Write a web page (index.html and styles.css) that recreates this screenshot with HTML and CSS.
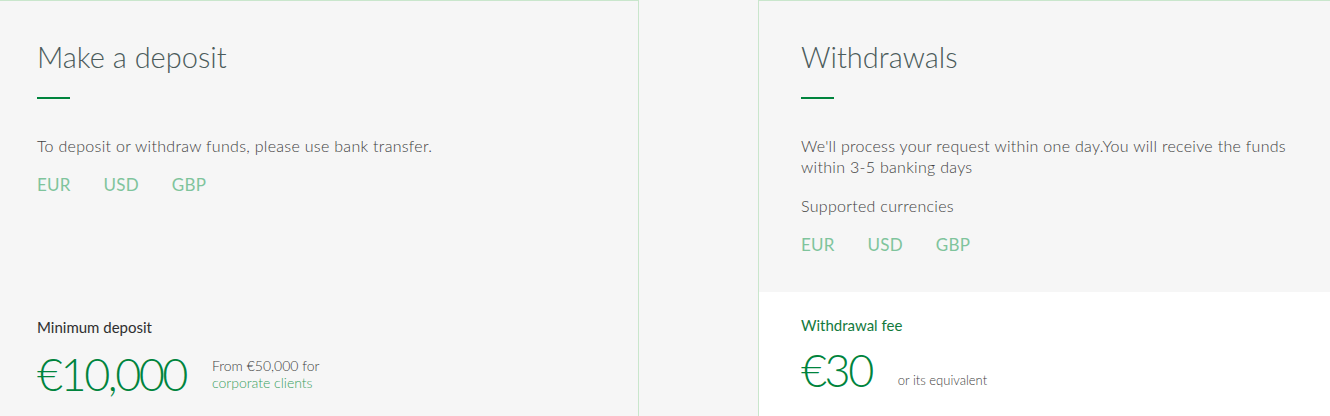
FILE: index.html
```html
<!DOCTYPE html>
<html lang="en">
<head>
    <meta charset="UTF-8">
    <meta name="viewport" content="width=device-width, initial-scale=1.0">
    <title>Deposits and withdrawals</title>
    <link rel="stylesheet" href="styles.css">
</head>
<body>

    <div class="funds">

        <div class="card card-deposit">
            <div class="card-top">
                <h2 class="card-title">Make a deposit</h2>
                <span class="title-line"></span>
                <p class="card-text">To deposit or withdraw funds, please use bank transfer.</p>
                <ul class="currencies">
                    <li>EUR</li>
                    <li>USD</li>
                    <li>GBP</li>
                </ul>
            </div>
            <div class="card-bottom">
                <div class="label">Minimum deposit</div>
                <div class="amount-row">
                    <span class="amount">€10,000</span>
                    <span class="amount-note">From €50,000 for<br><a href="#">corporate clients</a></span>
                </div>
            </div>
        </div>

        <div class="card card-withdraw">
            <div class="card-top">
                <h2 class="card-title">Withdrawals</h2>
                <span class="title-line"></span>
                <p class="card-text text-wide">We'll process your request within one day.You will receive the funds within 3-5 banking days</p>
                <p class="card-text">Supported currencies</p>
                <ul class="currencies">
                    <li>EUR</li>
                    <li>USD</li>
                    <li>GBP</li>
                </ul>
            </div>
            <div class="card-bottom bottom-white">
                <div class="label label-green">Withdrawal fee</div>
                <div class="amount-row">
                    <span class="amount">€30</span>
                    <span class="amount-note note-low">or its equivalent</span>
                </div>
            </div>
        </div>

    </div>

</body>
</html>
```

FILE: styles.css
```css
body{
    margin: 0;
    background-color: #f6f6f6;
    font-family: Lato, 'Open Sans', sans-serif;
    color: #444;
}

.funds{
    display: flex;
    gap: 119px;
    height: 416px;
}

.card{
    border: 1px solid #c9e6cc;
    border-bottom: none;
    background-color: #f6f6f6;
    display: flex;
    flex-direction: column;
}

.card-deposit{
    width: 638px;
    margin-left: -1px;
    flex-shrink: 0;
}

.card-withdraw{
    flex: 1;
    margin-right: -1px;
}

.card-top{
    height: 291px;
    padding: 39px 37px 0;
    box-sizing: border-box;
}

.card-withdraw .card-top{
    padding-left: 42px;
}

.card-title{
    margin: 0;
    font-size: 29px;
    font-weight: 300;
    line-height: 34px;
    color: #4b5b5b;
}

.title-line{
    display: block;
    width: 33px;
    height: 2px;
    margin-top: 23px;
    background-color: #00843d;
}

.card-text{
    margin: 36px 0 0;
    font-size: 16px;
    font-weight: 300;
    line-height: 21px;
    letter-spacing: 0.3px;
    color: #3f3f3f;
}

.card-text + .card-text{
    margin-top: 18px;
}

.text-wide{
    max-width: 500px;
}

.currencies{
    list-style: none;
    margin: 18px 0 0;
    padding: 0;
    display: flex;
    gap: 33px;
    font-size: 17px;
    line-height: 21px;
    letter-spacing: 0.2px;
    color: #7fc49c;
}

.card-bottom{
    flex: 1;
    padding: 25px 37px 0;
}

.bottom-white{
    background-color: #fff;
    padding-left: 42px;
    padding-top: 23px;
}

.label{
    font-size: 15px;
    line-height: 20px;
    color: #2f2f2f;
}

.label-green{
    color: #137a3d;
}

.amount-row{
    display: flex;
    align-items: center;
    gap: 26px;
    margin-top: 9px;
}

.amount{
    font-size: 45px;
    font-weight: 300;
    line-height: 56px;
    letter-spacing: -2.5px;
    color: #00843d;
}

.amount-note{
    font-size: 14px;
    font-weight: 300;
    line-height: 17px;
    color: #3f3f3f;
}

.amount-note a{
    color: #3a9f5f;
    text-decoration: none;
}

.note-low{
    font-size: 13px;
    align-self: flex-end;
    margin-bottom: 9px;
}

.bottom-white .amount-row{
    margin-top: 7px;
}
```
